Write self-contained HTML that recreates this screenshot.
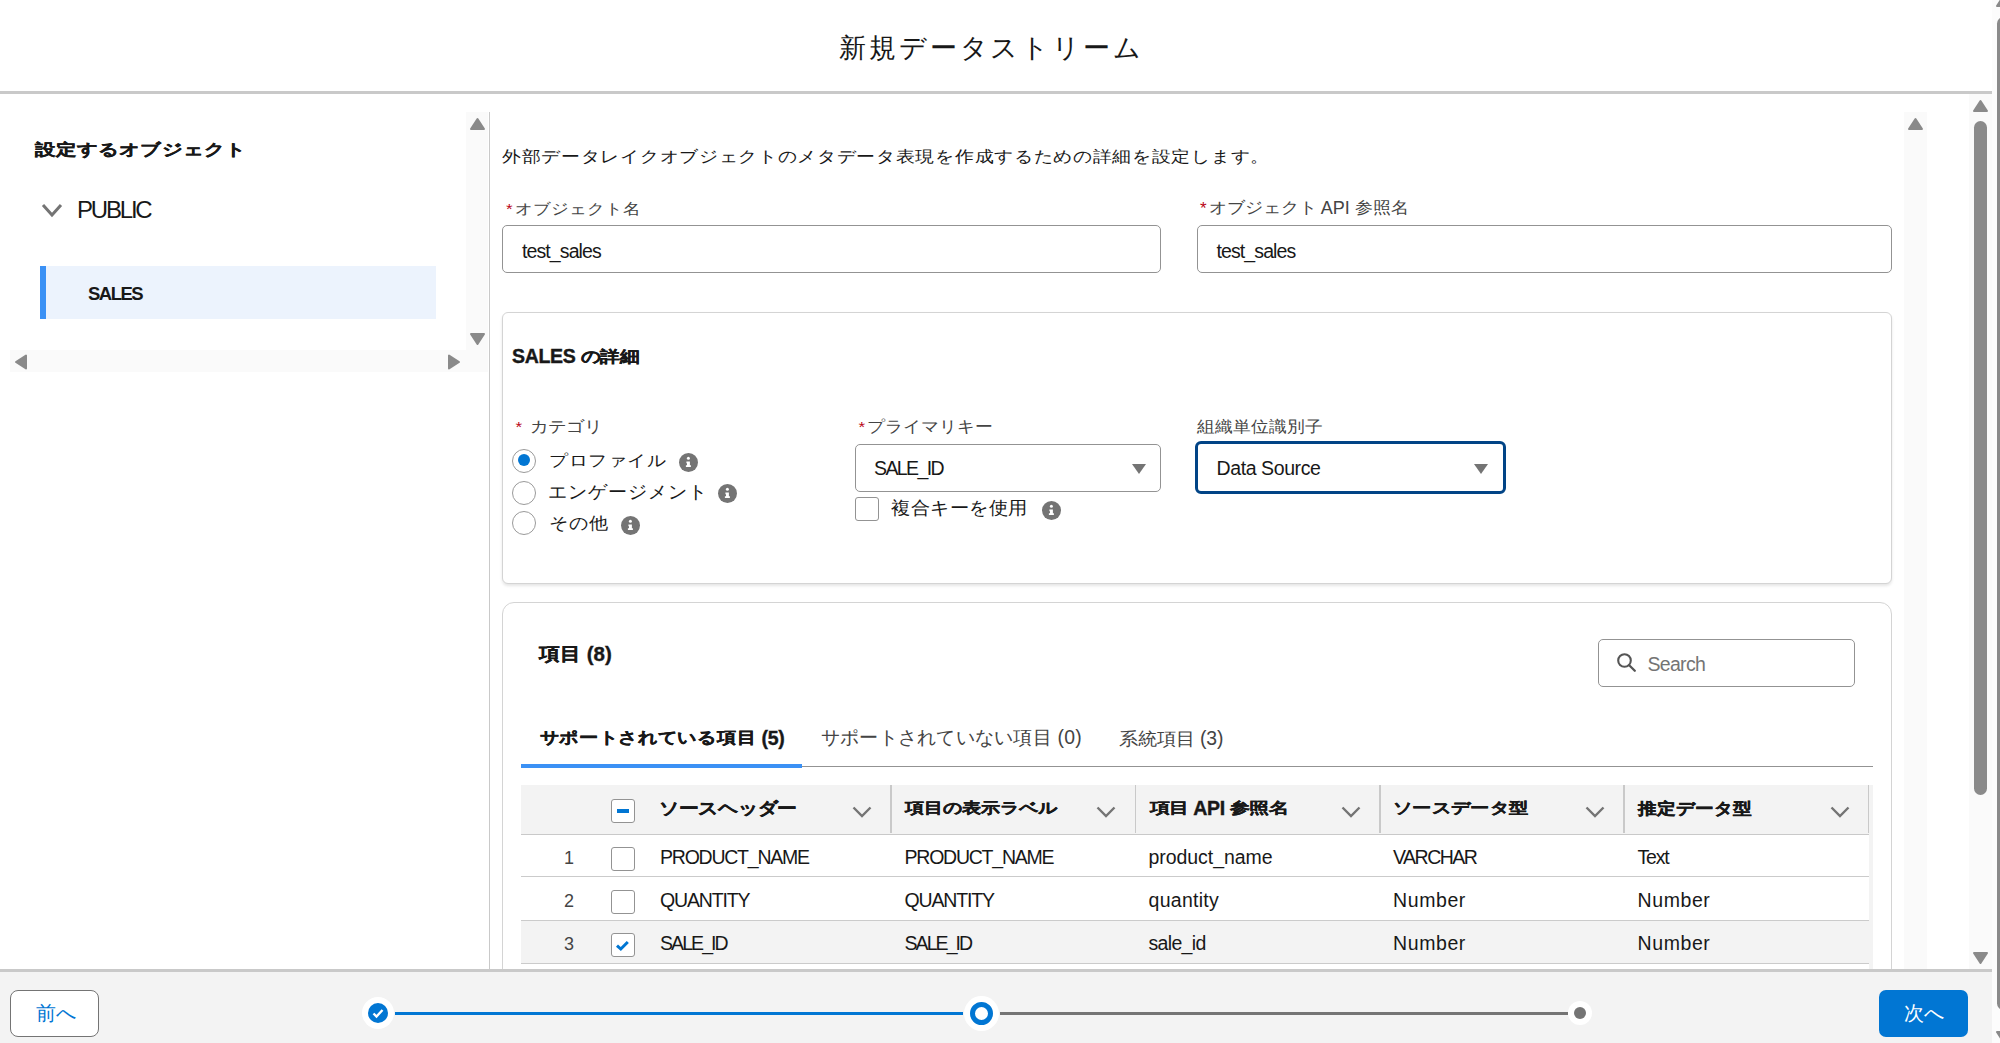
<!DOCTYPE html>
<html><head><meta charset="utf-8">
<style>
html,body{margin:0;padding:0;width:2000px;height:1043px;overflow:hidden;background:#fff;}
body{font-family:"Liberation Sans",sans-serif;color:#181818;position:relative;}
.a{position:absolute;}
.t{position:absolute;white-space:nowrap;line-height:1;}
.lbl{color:#444;font-size:18px;}
.req{color:#ba0517;}
.box{position:absolute;box-sizing:border-box;background:#fff;border:1.5px solid #939393;border-radius:5px;}
.info{position:absolute;width:19px;height:19px;border-radius:50%;background:#747474;}
.info:before{content:"";position:absolute;left:8px;top:4px;width:3px;height:3px;background:#fff;border-radius:50%;}
.info:after{content:"";position:absolute;left:8px;top:8px;width:3px;height:7px;background:#fff;}
.radio{position:absolute;box-sizing:border-box;width:24px;height:24px;border-radius:50%;border:1.6px solid #9a9a9a;background:#fff;}
.cb{position:absolute;box-sizing:border-box;width:24px;height:24px;border-radius:3px;border:1.5px solid #939393;background:#fff;}
.tri{position:absolute;width:0;height:0;border-left:7.5px solid transparent;border-right:7.5px solid transparent;border-top:10px solid #747474;}
.sb{position:absolute;background:#fafafa;}
.arr{position:absolute;}
.hdrc{position:absolute;top:785px;height:49px;}
.ht{font-weight:bold;font-size:19.5px;color:#181818;-webkit-text-stroke:0.4px #181818;}
.bs{-webkit-text-stroke:0.4px #181818;}
.cell{font-size:19.5px;color:#181818;}
</style></head><body>

<!-- header -->
<div class="a" style="left:0;top:0;width:1992px;height:91px;background:#fff;"></div>
<div class="a" style="left:0;top:91px;width:1992px;height:3px;background:#c9c9c9;"></div>
<div class="t" id="title" style="left:839px;top:35px;font-size:27px;letter-spacing:2.9px;">新規データストリーム</div>

<!-- left panel -->
<div class="t bs" style="transform-origin:0 12.80px;transform:scaleY(0.783);left:35px;top:139px;font-size:20px;letter-spacing:1.1px;font-weight:bold;">設定するオブジェクト</div>
<svg class="a" style="left:40px;top:202px" width="24" height="18" viewBox="0 0 24 18"><path d="M3 3 L12 13 L21 3" fill="none" stroke="#747474" stroke-width="3"/></svg>
<div class="t" style="left:77px;top:197.5px;font-size:24px;letter-spacing:-2.2px;">PUBLIC</div>
<div class="a" style="left:40px;top:265.5px;width:396px;height:53.5px;background:#ecf3fd;"></div>
<div class="a" style="left:40px;top:265.5px;width:6px;height:53.5px;background:#3b91f5;"></div>
<div class="t" style="left:88px;top:284.5px;font-size:18.5px;letter-spacing:-1.5px;font-weight:bold;">SALES</div>

<!-- left scrollbars -->
<div class="sb" style="left:466px;top:112px;width:22px;height:260px;"></div>
<div class="sb" style="left:10px;top:350px;width:478px;height:22px;"></div>
<svg class="arr" style="left:469px;top:117px" width="17" height="14"><path d="M8.5 2 L15 12 L2 12 Z" fill="#8a8a8a" stroke="#8a8a8a" stroke-width="2" stroke-linejoin="round"/></svg>
<svg class="arr" style="left:469px;top:332px" width="17" height="14"><path d="M2 2 L15 2 L8.5 12 Z" fill="#8a8a8a" stroke="#8a8a8a" stroke-width="2" stroke-linejoin="round"/></svg>
<svg class="arr" style="left:14px;top:353px" width="15" height="18"><path d="M2 9 L12 2.5 L12 15.5 Z" fill="#8a8a8a" stroke="#8a8a8a" stroke-width="2" stroke-linejoin="round"/></svg>
<svg class="arr" style="left:446px;top:353px" width="15" height="18"><path d="M13 9 L3 2.5 L3 15.5 Z" fill="#8a8a8a" stroke="#8a8a8a" stroke-width="2" stroke-linejoin="round"/></svg>
<div class="a" style="left:489px;top:112px;width:1px;height:857px;background:#c9c9c9;"></div>

<!-- main -->
<div class="t" style="transform-origin:0 13.33px;transform:scaleY(0.850);left:502px;top:146px;font-size:19px;letter-spacing:0.69px;color:#181818;">外部データレイクオブジェクトのメタデータ表現を作成するための詳細を設定します。</div>

<div class="t lbl" style="transform-origin:0 4.65px;transform:scaleY(0.856);left:506px;top:199.5px;"><span class="req" style="font-size:17px">*</span><span style="margin-left:2px">オブジェクト名</span></div>
<div class="box" style="left:502px;top:225px;width:659px;height:48px;"></div>
<div class="t" style="left:522px;top:242px;font-size:19.5px;letter-spacing:-0.9px;">test_sales</div>

<div class="t lbl" style="left:1200px;top:199px;"><span class="req" style="font-size:17px">*</span><span style="margin-left:2px"><span style="display:inline-block;transform-origin:0 9.00px;transform:scaleY(0.889)">オブジェクト</span> API <span style="display:inline-block;transform-origin:0 9.00px;transform:scaleY(0.889)">参照名</span></span></div>
<div class="box" style="left:1197px;top:225px;width:695px;height:48px;"></div>
<div class="t" style="left:1216.5px;top:242px;font-size:19.5px;letter-spacing:-0.9px;">test_sales</div>

<!-- card 1 -->
<div class="a" style="left:502px;top:312px;width:1390px;height:272px;box-sizing:border-box;border:1.5px solid #d4d4d4;border-radius:6px;box-shadow:0 2px 3px rgba(0,0,0,0.10);background:#fff;"></div>
<div class="t bs" style="left:512px;top:346.5px;font-size:19.5px;letter-spacing:-0.3px;font-weight:bold;">SALES <span style="display:inline-block;transform-origin:0 10.00px;transform:scaleY(0.810)">の詳細</span></div>

<div class="t lbl" style="transform-origin:0 7.50px;transform:scaleY(0.867);left:515.5px;top:418px;"><span class="req" style="font-size:17px">*</span><span style="margin-left:8px">カテゴリ</span></div>
<div class="radio" style="left:512px;top:448.5px;"><div class="a" style="left:4.5px;top:4.5px;width:12px;height:12px;border-radius:50%;background:#0176d3;"></div></div>
<div class="t" style="transform-origin:0 5.93px;transform:scaleY(0.853);left:549px;top:450.5px;font-size:19px;letter-spacing:0.6px;color:#181818;">プロファイル</div>
<div class="a" style="left:679px;top:452.5px;width:19px;height:19px;"><svg width="19" height="19" viewBox="0 0 19 19"><circle cx="9.5" cy="9.5" r="9.5" fill="#747474"/><circle cx="9.4" cy="5.3" r="1.5" fill="#fff"/><path d="M7.4 8.4 H10.9 V12.3 H11.9 V14.1 H6.9 V12.3 H8 V10.2 H7.4 Z" fill="#fff"/></svg></div>
<div class="radio" style="left:512px;top:480.6px;"></div>
<div class="t" style="transform-origin:0 3.80px;transform:scaleY(0.947);left:548px;top:483px;font-size:19.5px;color:#181818;">エンゲージメント</div>
<div class="a" style="left:718px;top:483.5px;width:19px;height:19px;"><svg width="19" height="19" viewBox="0 0 19 19"><circle cx="9.5" cy="9.5" r="9.5" fill="#747474"/><circle cx="9.4" cy="5.3" r="1.5" fill="#fff"/><path d="M7.4 8.4 H10.9 V12.3 H11.9 V14.1 H6.9 V12.3 H8 V10.2 H7.4 Z" fill="#fff"/></svg></div>
<div class="radio" style="left:512px;top:511.4px;"></div>
<div class="t" style="transform-origin:0 5.45px;transform:scaleY(0.890);left:549px;top:514px;font-size:19.5px;color:#181818;">その他</div>
<div class="a" style="left:621px;top:515.5px;width:19px;height:19px;"><svg width="19" height="19" viewBox="0 0 19 19"><circle cx="9.5" cy="9.5" r="9.5" fill="#747474"/><circle cx="9.4" cy="5.3" r="1.5" fill="#fff"/><path d="M7.4 8.4 H10.9 V12.3 H11.9 V14.1 H6.9 V12.3 H8 V10.2 H7.4 Z" fill="#fff"/></svg></div>

<div class="t lbl" style="transform-origin:0 7.50px;transform:scaleY(0.900);left:858.5px;top:417.5px;"><span class="req" style="font-size:17px">*</span><span style="margin-left:2px">プライマリキー</span></div>
<div class="box" style="left:855px;top:444px;width:306px;height:48px;"></div>
<div class="t" style="left:874px;top:459px;font-size:19.5px;letter-spacing:-1.6px;">SALE_ID</div>
<div class="tri" style="left:1132px;top:464.2px;"></div>
<div class="cb" style="left:855px;top:497px;"></div>
<div class="t" style="transform-origin:0 7.92px;transform:scaleY(0.937);left:891px;top:499px;font-size:19px;letter-spacing:0.5px;color:#181818;">複合キーを使用</div>
<div class="a" style="left:1042px;top:500.5px;width:19px;height:19px;"><svg width="19" height="19" viewBox="0 0 19 19"><circle cx="9.5" cy="9.5" r="9.5" fill="#747474"/><circle cx="9.4" cy="5.3" r="1.5" fill="#fff"/><path d="M7.4 8.4 H10.9 V12.3 H11.9 V14.1 H6.9 V12.3 H8 V10.2 H7.4 Z" fill="#fff"/></svg></div>

<div class="t lbl" style="transform-origin:0 7.50px;transform:scaleY(0.900);left:1197px;top:417.5px;">組織単位識別子</div>
<div class="a" style="left:1195px;top:441px;width:311px;height:53px;box-sizing:border-box;border:3px solid #014486;border-radius:6px;background:#fff;"></div>
<div class="t" style="left:1216.5px;top:458.5px;font-size:19.5px;letter-spacing:-0.4px;">Data Source</div>
<div class="tri" style="left:1473.5px;top:464.2px;"></div>

<!-- card 2 -->
<div class="a" style="left:502px;top:602px;width:1390px;height:500px;box-sizing:border-box;border:1.5px solid #d4d4d4;border-radius:12px;background:#fff;"></div>
<div class="t bs" style="left:539px;top:643.5px;font-size:20.5px;font-weight:bold;"><span style="display:inline-block;transform-origin:0 5.81px;transform:scaleY(0.868)">項目</span> (8)</div>
<div class="box" style="left:1598px;top:639px;width:257px;height:48px;"></div>
<svg class="a" style="left:1615px;top:651px" width="24" height="24" viewBox="0 0 24 24"><circle cx="9.5" cy="9.5" r="6.3" fill="none" stroke="#555" stroke-width="2.1"/><path d="M14.2 14.2 L19.8 19.8" stroke="#555" stroke-width="2.3" stroke-linecap="round"/></svg>
<div class="t" style="left:1647.5px;top:655px;font-size:19.5px;letter-spacing:-0.7px;color:#747474;">Search</div>

<div class="t bs" style="left:539.5px;top:728.5px;font-size:19.5px;letter-spacing:-0.29px;font-weight:bold;"><span style="display:inline-block;transform-origin:0 6.68px;transform:scaleY(0.838)">サポートされている項目</span> (5)</div>
<div class="t" style="left:821px;top:728px;font-size:19.4px;letter-spacing:0.24px;color:#444;">サポートされていない項目 (0)</div>
<div class="t" style="left:1119px;top:729px;font-size:19.4px;letter-spacing:-0.1px;color:#444;"><span style="display:inline-block;transform-origin:0 12.31px;transform:scaleY(0.935)">系統項目</span> (3)</div>
<div class="a" style="left:521px;top:766px;width:1352px;height:1px;background:#939393;"></div>
<div class="a" style="left:521px;top:763.5px;width:281px;height:4.3px;background:#3b91f5;"></div>

<!-- table -->
<div class="a" style="left:521px;top:785px;width:1348px;height:49px;background:#f3f3f3;"></div>
<div class="a" style="left:521px;top:833.5px;width:1348px;height:1.5px;background:#c9c9c9;"></div>
<div class="a" style="left:890px;top:785px;width:1.5px;height:48px;background:#c9c9c9;"></div>
<div class="a" style="left:1134.5px;top:785px;width:1.5px;height:48px;background:#c9c9c9;"></div>
<div class="a" style="left:1379px;top:785px;width:1.5px;height:48px;background:#c9c9c9;"></div>
<div class="a" style="left:1623px;top:785px;width:1.5px;height:48px;background:#c9c9c9;"></div>
<div class="a" style="left:1867.5px;top:785px;width:1.5px;height:48px;background:#c9c9c9;"></div>
<div class="a" style="left:1869px;top:785px;width:4px;height:184px;background:#f3f3f3;"></div>

<div class="cb" style="left:611px;top:799px;"><div class="a" style="left:4.5px;top:9px;width:12px;height:3.5px;background:#0176d3;"></div></div>
<div class="t ht" style="transform-origin:0 6.50px;transform:scaleY(0.857);left:659px;top:798.5px;letter-spacing:-0.3px;">ソースヘッダー</div>
<div class="t ht" style="transform-origin:0 6.50px;transform:scaleY(0.786);left:904.5px;top:798.5px;letter-spacing:-0.9px;">項目の表示ラベル</div>
<div class="t ht" style="left:1149.5px;top:798.5px;letter-spacing:-0.33px;"><span style="display:inline-block;transform-origin:0 8.50px;transform:scaleY(0.750)">項目</span> API <span style="display:inline-block;transform-origin:0 8.50px;transform:scaleY(0.750)">参照名</span></div>
<div class="t ht" style="transform-origin:0 6.4px;transform:scaleY(0.781);left:1393px;top:798.5px;letter-spacing:-0.7px;">ソースデータ型</div>
<div class="t ht" style="transform-origin:0 6.50px;transform:scaleY(0.857);left:1638px;top:798.5px;font-size:19px;">推定データ型</div>
<svg class="a" style="left:851px;top:805px" width="22" height="14"><path d="M2.5 2.5 L11 11 L19.5 2.5" fill="none" stroke="#747474" stroke-width="2.4"/></svg>
<svg class="a" style="left:1095px;top:805px" width="22" height="14"><path d="M2.5 2.5 L11 11 L19.5 2.5" fill="none" stroke="#747474" stroke-width="2.4"/></svg>
<svg class="a" style="left:1340px;top:805px" width="22" height="14"><path d="M2.5 2.5 L11 11 L19.5 2.5" fill="none" stroke="#747474" stroke-width="2.4"/></svg>
<svg class="a" style="left:1584px;top:805px" width="22" height="14"><path d="M2.5 2.5 L11 11 L19.5 2.5" fill="none" stroke="#747474" stroke-width="2.4"/></svg>
<svg class="a" style="left:1829px;top:805px" width="22" height="14"><path d="M2.5 2.5 L11 11 L19.5 2.5" fill="none" stroke="#747474" stroke-width="2.4"/></svg>

<!-- rows -->
<div class="a" style="left:521px;top:876px;width:1348px;height:1.3px;background:#cbcbcb;"></div>
<div class="a" style="left:521px;top:920px;width:1348px;height:43px;background:#f3f3f3;"></div>
<div class="a" style="left:521px;top:919.5px;width:1348px;height:1.3px;background:#cbcbcb;"></div>
<div class="a" style="left:521px;top:962.5px;width:1348px;height:1.3px;background:#cbcbcb;"></div>

<div class="t cell" style="left:564px;top:848.5px;color:#444;font-size:18px;">1</div>
<div class="cb" style="left:611px;top:847px;"></div>
<div class="t cell" style="left:660px;top:847.5px;letter-spacing:-1.23px;">PRODUCT_NAME</div>
<div class="t cell" style="left:904.5px;top:847.5px;letter-spacing:-1.23px;">PRODUCT_NAME</div>
<div class="t cell" style="left:1148.5px;top:847.5px;letter-spacing:-0.05px;">product_name</div>
<div class="t cell" style="left:1393px;top:847.5px;letter-spacing:-1.5px;">VARCHAR</div>
<div class="t cell" style="left:1637.5px;top:847.5px;letter-spacing:-1.17px;">Text</div>

<div class="t cell" style="left:564px;top:891.5px;color:#444;font-size:18px;">2</div>
<div class="cb" style="left:611px;top:890px;"></div>
<div class="t cell" style="left:660px;top:890.5px;letter-spacing:-1.14px;">QUANTITY</div>
<div class="t cell" style="left:904.5px;top:890.5px;letter-spacing:-1.14px;">QUANTITY</div>
<div class="t cell" style="left:1148.5px;top:890.5px;letter-spacing:0.29px;">quantity</div>
<div class="t cell" style="left:1393px;top:890.5px;letter-spacing:0.6px;">Number</div>
<div class="t cell" style="left:1637.5px;top:890.5px;letter-spacing:0.6px;">Number</div>

<div class="t cell" style="left:564px;top:934.5px;color:#444;font-size:18px;">3</div>
<div class="cb" style="left:611px;top:933px;"><svg class="a" style="left:2px;top:3px" width="18" height="16"><path d="M3 8.6 L6.8 12 L13.8 5" fill="none" stroke="#0176d3" stroke-width="3"/></svg></div>
<div class="t cell" style="left:660px;top:933.5px;letter-spacing:-1.92px;">SALE_ID</div>
<div class="t cell" style="left:904.5px;top:933.5px;letter-spacing:-1.92px;">SALE_ID</div>
<div class="t cell" style="left:1148.5px;top:933.5px;letter-spacing:-0.67px;">sale_id</div>
<div class="t cell" style="left:1393px;top:933.5px;letter-spacing:0.6px;">Number</div>
<div class="t cell" style="left:1637.5px;top:933.5px;letter-spacing:0.6px;">Number</div>

<!-- inner & outer scrollbars -->
<div class="sb" style="left:1904px;top:112px;width:23px;height:857px;"></div>
<svg class="arr" style="left:1907px;top:117px" width="17" height="14"><path d="M8.5 2 L15 12 L2 12 Z" fill="#8a8a8a" stroke="#8a8a8a" stroke-width="2" stroke-linejoin="round"/></svg>

<div class="sb" style="left:1969px;top:94px;width:28px;height:949px;"></div>
<svg class="arr" style="left:1972px;top:99px" width="17" height="14"><path d="M8.5 2 L15 12 L2 12 Z" fill="#8a8a8a" stroke="#8a8a8a" stroke-width="2" stroke-linejoin="round"/></svg>
<div class="a" style="left:1974px;top:121px;width:13px;height:674px;border-radius:6.5px;background:#8a8a8a;"></div>
<svg class="arr" style="left:1972px;top:951px" width="17" height="14"><path d="M2 2 L15 2 L8.5 12 Z" fill="#8a8a8a" stroke="#8a8a8a" stroke-width="2" stroke-linejoin="round"/></svg>
<div class="a" style="left:1992px;top:0;width:8px;height:1043px;background:#fcfcfc;"></div>
<div class="a" style="left:1997px;top:17px;width:13px;height:993px;border-radius:6.5px;background:#8a8a8a;"></div>
<svg class="arr" style="left:1995px;top:-6px" width="17" height="14"><path d="M8.5 2 L15 12 L2 12 Z" fill="#8a8a8a" stroke="#8a8a8a" stroke-width="2" stroke-linejoin="round"/></svg>
<svg class="arr" style="left:1995px;top:1030px" width="17" height="14"><path d="M2 2 L15 2 L8.5 12 Z" fill="#8a8a8a" stroke="#8a8a8a" stroke-width="2" stroke-linejoin="round"/></svg>

<!-- footer -->
<div class="a" style="left:0;top:969px;width:1992px;height:74px;background:#f3f3f3;"></div>
<div class="a" style="left:0;top:969px;width:1992px;height:3px;background:#c9c9c9;"></div>
<div class="a" style="left:10px;top:990px;width:89px;height:47px;box-sizing:border-box;border:1.5px solid #747474;border-radius:8px;background:#fff;"></div>
<div class="t" style="left:35.5px;top:1004px;font-size:19.5px;color:#0176d3;">前へ</div>

<div class="a" style="left:395px;top:1011.5px;width:568px;height:3px;background:#0176d3;"></div>
<div class="a" style="left:1000px;top:1011.5px;width:568px;height:3px;background:#747474;"></div>
<div class="a" style="left:362px;top:997px;width:32px;height:32px;border-radius:50%;background:#fff;"></div>
<div class="a" style="left:368px;top:1003px;width:20px;height:20px;border-radius:50%;background:#0176d3;"></div>
<svg class="a" style="left:368px;top:1003px" width="20" height="20"><path d="M5.5 10.5 L8.5 13.5 L14.5 7" fill="none" stroke="#fff" stroke-width="2.4"/></svg>
<div class="a" style="left:963.5px;top:995.5px;width:35px;height:35px;border-radius:50%;background:#fff;"></div>
<div class="a" style="left:969.5px;top:1001.5px;width:23px;height:23px;box-sizing:border-box;border:5px solid #0176d3;border-radius:50%;background:#fff;"></div>
<div class="a" style="left:1568px;top:1001px;width:24px;height:24px;border-radius:50%;background:#fff;"></div>
<div class="a" style="left:1574px;top:1007px;width:12px;height:12px;border-radius:50%;background:#747474;"></div>

<div class="a" style="left:1879px;top:990px;width:89px;height:47px;border-radius:7px;background:#0176d3;"></div>
<div class="t" style="left:1904px;top:1004px;font-size:19.5px;color:#fff;">次へ</div>

</body></html>
